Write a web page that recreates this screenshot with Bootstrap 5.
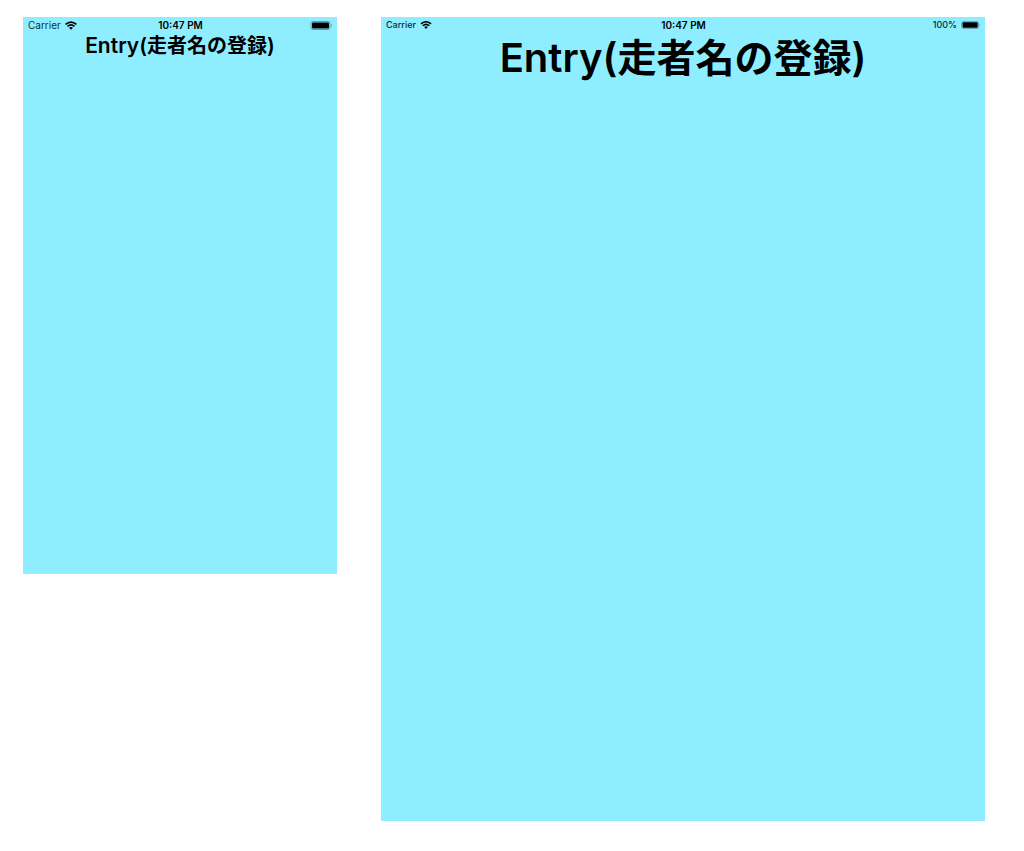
<!DOCTYPE html>
<html lang="ja">
<head>
<meta charset="utf-8">
<meta name="viewport" content="width=device-width, initial-scale=1">
<title>Entry</title>
<link href="https://cdn.jsdelivr.net/npm/bootstrap@5.3.0/dist/css/bootstrap.min.css" rel="stylesheet">
<style>
  body { background: #fff; color: #000; font-family: Inter, "Noto Sans CJK JP", sans-serif; }
  .devices { display: grid; grid-template-columns: 314fr 604fr; column-gap: 44px; padding: 17px 39px 29px 23px; }
  .screen { background: #8eeeff; }
  .phone { aspect-ratio: 314 / 557; }
  .tablet { aspect-ratio: 604 / 804; }
  .status { display: grid; grid-template-columns: 1fr auto 1fr; padding: 0 4px 0 5px; font-size: 10px; line-height: 17px; }
  .tablet .status { line-height: 16px; }
  .carrier, .level { color: #0c3037; }
  .tablet .carrier, .tablet .level { font-size: 9px; font-weight: 500; }
  .clock { font-weight: 600; }
  .title { font-weight: 600; font-size: 21px; line-height: 24px; }
  .title span { font-size: 20px; line-height: 1; }
  .tablet .title { font-size: 40px; line-height: 50px; }
  .tablet .title span { font-size: 39px; }
</style>
</head>
<body>
<svg class="d-none" aria-hidden="true">
  <symbol id="wifi" viewBox="0 0 24 17">
    <g fill="none" stroke="#000" stroke-width="3.2"><path d="M1.2 6.2Q12-3 22.8 6.2"/><path d="M5 10.2Q12 4.2 19 10.2"/></g>
    <path d="M8 13Q12 9.6 16 13L12 17Z"/>
  </symbol>
  <symbol id="battery" viewBox="0 0 44 18">
    <rect x="1" y="1" width="38" height="16" rx="4" fill="none" stroke="#5b9aa6" stroke-width="2"/>
    <rect x="3" y="3" width="34" height="12" rx="2"/>
    <path d="M41 6Q44 9 41 12Z" fill="#47808a"/>
  </symbol>
</svg>
<main class="devices align-items-start">
  <section class="screen phone">
    <div class="status">
      <div class="carrier d-flex align-items-center gap-1"><span>Carrier</span><svg width="12" height="9"><use href="#wifi"/></svg></div>
      <div class="clock">10:47 PM</div>
      <div class="level d-flex align-items-center justify-content-end"><svg width="23" height="9"><use href="#battery"/></svg></div>
    </div>
    <h1 class="title text-center text-nowrap m-0">Entry(<span>走者名の登録</span>)</h1>
  </section>
  <section class="screen tablet">
    <div class="status">
      <div class="carrier d-flex align-items-center gap-1"><span>Carrier</span><svg width="12" height="8"><use href="#wifi"/></svg></div>
      <div class="clock">10:47 PM</div>
      <div class="level d-flex align-items-center justify-content-end"><span>100%</span><svg class="ms-1" width="20" height="8"><use href="#battery"/></svg></div>
    </div>
    <h1 class="title text-center text-nowrap m-0">Entry(<span>走者名の登録</span>)</h1>
  </section>
</main>
<script src="https://cdn.jsdelivr.net/npm/bootstrap@5.3.0/dist/js/bootstrap.bundle.min.js"></script>
</body>
</html>
